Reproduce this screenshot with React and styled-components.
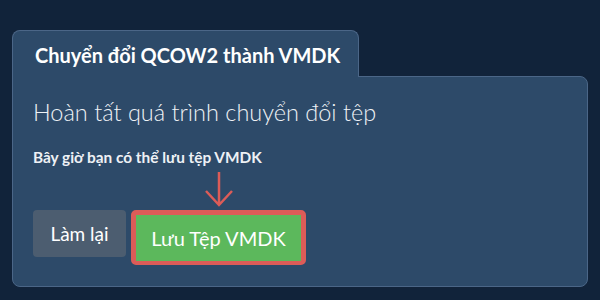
import React from 'react';
import styled, { createGlobalStyle } from 'styled-components';

const GlobalStyle = createGlobalStyle`
  html, body {
    margin: 0;
    padding: 0;
    background: #11233a;
  }
  body {
    font-family: Lato, "Noto Sans", sans-serif;
    color: #f2f4f7;
  }
`;

const Page = styled.div`
  width: 600px;
  height: 300px;
  box-sizing: border-box;
  padding: 30px 12px 0 12px;
`;

const Card = styled.div`
  display: flex;
  flex-direction: column;
  width: 576px;
`;

const Tab = styled.div`
  align-self: flex-start;
  box-sizing: border-box;
  width: 347px;
  height: 47px;
  padding: 12px 0 0 22px;
  background: #2d4a69;
  border: 1px solid #4b6687;
  border-bottom: none;
  border-radius: 8px 8px 0 0;
  font-size: 20px;
  font-weight: 700;
  line-height: 1.2;
  color: #ffffff;
  position: relative;
  z-index: 1;
  margin-bottom: -1px;
`;

const Panel = styled.div`
  box-sizing: border-box;
  height: 211px;
  padding: 21px 20px 0 20px;
  background: #2d4a69;
  border: 1px solid #4b6687;
  border-radius: 0 8px 8px 8px;
`;

const Heading = styled.h2`
  margin: 0;
  font-size: 23.5px;
  font-weight: 300;
  line-height: 1.2;
  color: #eef1f5;
`;

const Note = styled.p`
  margin: 22px 0 0 0;
  font-size: 15.4px;
  font-weight: 700;
  line-height: 18px;
  color: #eef1f5;
`;

const Actions = styled.div`
  display: flex;
  align-items: flex-start;
  gap: 5px;
  margin-top: 44px;
`;

const Button = styled.button`
  box-sizing: border-box;
  font-family: Lato, "Noto Sans", sans-serif;
  font-weight: 400;
  color: #ffffff;
  cursor: pointer;
  line-height: 1;
`;

const GhostButton = styled(Button)`
  width: 93px;
  height: 47px;
  border: none;
  border-radius: 4px;
  background: #4c5d70;
  font-size: 19px;
`;

const Highlight = styled.div`
  position: relative;
`;

const PrimaryButton = styled(Button)`
  width: 175px;
  height: 55px;
  border: 5px solid #dc5c58;
  border-bottom-width: 4px;
  border-radius: 5px;
  background: #5cb85c;
  font-size: 20px;
`;

const Arrow = styled.svg`
  position: absolute;
  left: 50%;
  bottom: 100%;
  margin-bottom: 3px;
  transform: translateX(-50%);
`;

export default function App() {
  return (
    <>
      <GlobalStyle />
      <Page>
        <Card>
          <Tab>Chuyển đổi QCOW2 thành VMDK</Tab>
          <Panel>
            <Heading>Hoàn tất quá trình chuyển đổi tệp</Heading>
            <Note>Bây giờ bạn có thể lưu tệp VMDK</Note>
            <Actions>
              <GhostButton>Làm lại</GhostButton>
              <Highlight>
                <Arrow width="30" height="36" viewBox="0 0 30 36">
                  <path
                    d="M15 1 V34 M2 20 L15 34 L28 20"
                    fill="none"
                    stroke="#dc5c58"
                    strokeWidth="2.5"
                  />
                </Arrow>
                <PrimaryButton>Lưu Tệp VMDK</PrimaryButton>
              </Highlight>
            </Actions>
          </Panel>
        </Card>
      </Page>
    </>
  );
}
